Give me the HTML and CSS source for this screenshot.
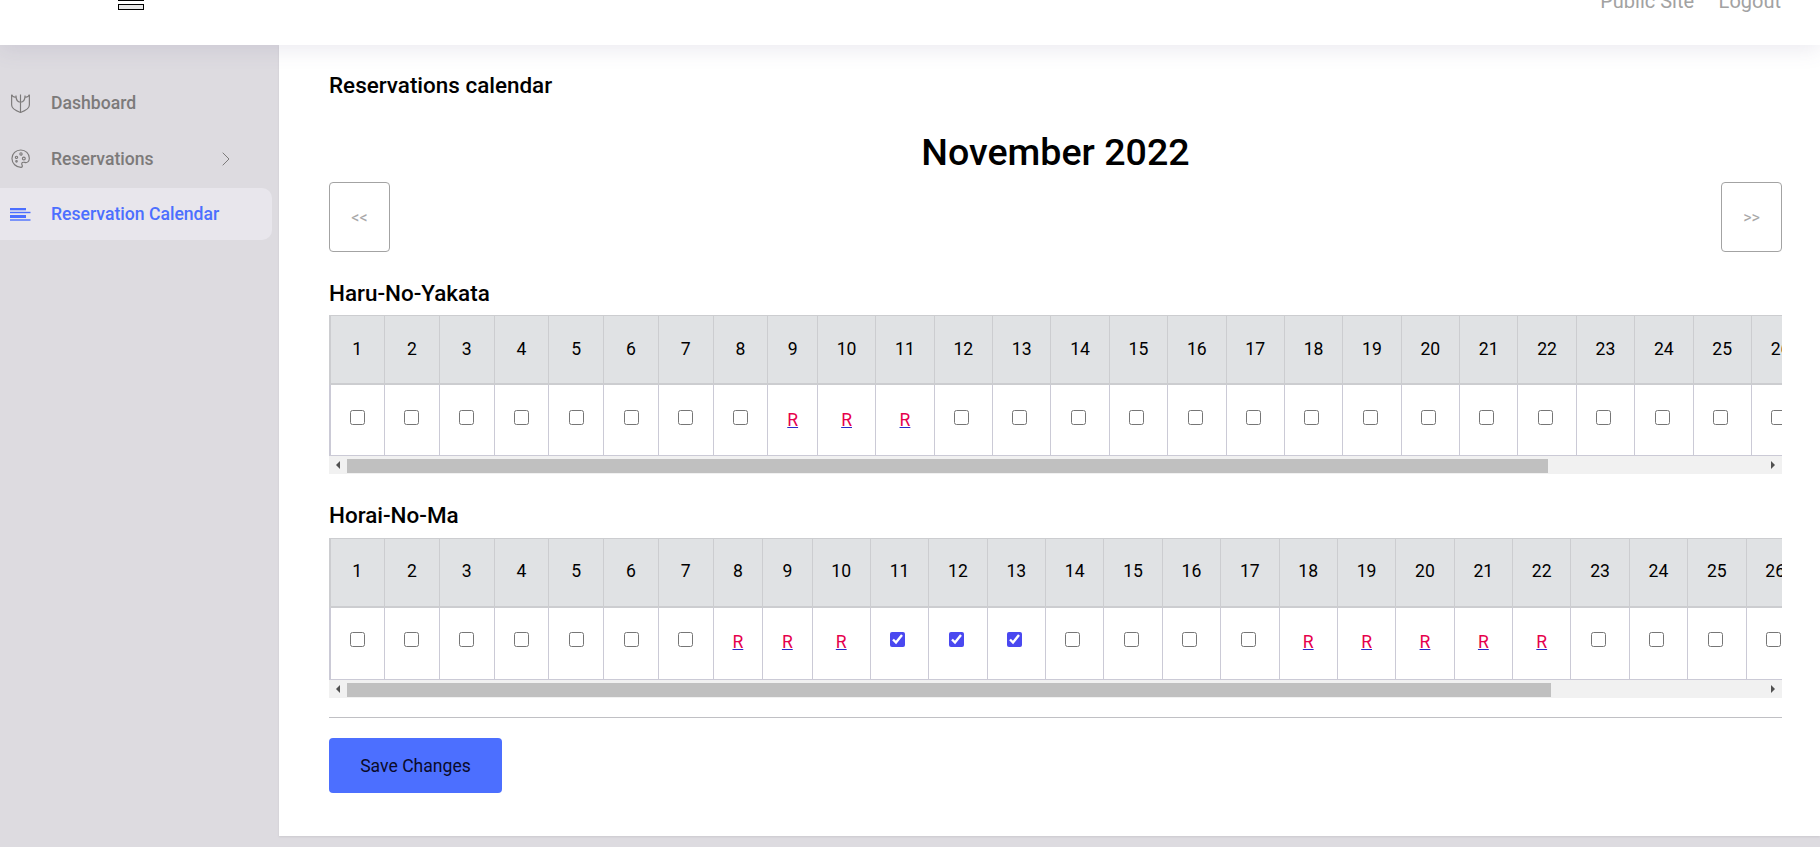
FILE: index.html
```html
<!DOCTYPE html>
<html lang="en">
<head>
<meta charset="utf-8">
<title>Reservations calendar</title>
<link rel="stylesheet" href="styles.css">
</head>
<body>
<header class="topbar">
  <div class="burger"><span class="burger-bar"></span><span class="burger-bar"></span></div>
  <nav class="toplinks"><a href="#">Public Site</a><a href="#">Logout</a></nav>
</header>
<div class="shell">
  <aside class="sidebar">
    <a class="side-item" href="#">
      <svg class="side-icon" viewBox="0 0 18 18" fill="none" stroke="currentColor" stroke-width="1.100"><path d="M.6.800V10.500c0 3.300 4 5.500 8.400 7 4.400-1.500 8.400-3.700 8.400-7V.800"/><path d="M.6.800C1.500 2.800 3 3.200 4.700 2.800M17.400.800C16.500 2.800 15 3.200 13.300 2.800"/><path d="M9 .5v17M4.700 1.500C4.700 5.800 6.500 7.800 9 7.800s4.300-2 4.300-6.300"/></svg>
      <span>Dashboard</span>
    </a>
    <a class="side-item" href="#">
      <svg class="side-icon" viewBox="0 0 20 20" fill="none" stroke="currentColor" stroke-width="1.200"><path d="M10.500 19.300C5.300 19.300 1 15.200 1 10.100 1 5 5.200 1 10.300 1c5.100 0 9 3.900 9 8.800 0 3.700-2.500 5-4.900 4.300-2.100-.6-3.400.4-3.100 1.900.2 1 1 1.500.6 2.400-.2.600-.7.900-1.400.9Z"/><circle cx="5.800" cy="8.800" r="1.200"/><circle cx="10.500" cy="5.200" r="1.200"/><circle cx="13.500" cy="10" r="1.500"/><circle cx="5.800" cy="13" r=".8"/></svg>
      <span>Reservations</span>
      <svg class="chevron" viewBox="0 0 8 14" fill="none" stroke="currentColor" stroke-width="1"><path d="M.7.700l6.300 6.300-6.300 6.300"/></svg>
    </a>
    <a class="side-item side-item-active" href="#">
      <svg class="side-icon side-icon-wide" viewBox="0 0 21 13" fill="currentColor"><rect x="0" y="0" width="16" height="2.300"/><rect x="0" y="3.800" width="20.500" height="1.400"/><rect x="0" y="7" width="16" height="3"/><rect x="0" y="11.300" width="20.500" height="1.400"/></svg>
      <span>Reservation Calendar</span>
    </a>
  </aside>
  <main class="panel">
    <h2 class="page-title">Reservations calendar</h2>
    <h1 class="month">November 2022</h1>
    <div class="month-nav">
      <button class="nav-btn" type="button">&lt;&lt;</button>
      <button class="nav-btn" type="button">&gt;&gt;</button>
    </div>

    <h3 class="room">Haru-No-Yakata</h3>
    <div class="scroller">
      <table class="cal">
        <thead><tr><th>1</th><th>2</th><th>3</th><th>4</th><th>5</th><th>6</th><th>7</th><th>8</th><th>9</th><th>10</th><th>11</th><th>12</th><th>13</th><th>14</th><th>15</th><th>16</th><th>17</th><th>18</th><th>19</th><th>20</th><th>21</th><th>22</th><th>23</th><th>24</th><th>25</th><th>26</th><th>27</th><th>28</th><th>29</th><th>30</th></tr></thead>
        <tbody><tr>
          <td><input type="checkbox"></td><td><input type="checkbox"></td><td><input type="checkbox"></td><td><input type="checkbox"></td><td><input type="checkbox"></td><td><input type="checkbox"></td><td><input type="checkbox"></td><td><input type="checkbox"></td>
          <td><a class="res" href="#"><span>R</span></a></td><td><a class="res" href="#"><span>R</span></a></td><td><a class="res" href="#"><span>R</span></a></td>
          <td><input type="checkbox"></td><td><input type="checkbox"></td><td><input type="checkbox"></td><td><input type="checkbox"></td><td><input type="checkbox"></td><td><input type="checkbox"></td><td><input type="checkbox"></td><td><input type="checkbox"></td><td><input type="checkbox"></td><td><input type="checkbox"></td><td><input type="checkbox"></td><td><input type="checkbox"></td><td><input type="checkbox"></td><td><input type="checkbox"></td><td><input type="checkbox"></td><td><input type="checkbox"></td><td><input type="checkbox"></td><td><input type="checkbox"></td><td><input type="checkbox"></td>
        </tr></tbody>
      </table>
    </div>
    <div class="hbar">
      <span class="hbar-btn hbar-left"></span>
      <span class="hbar-track"><span class="hbar-thumb"></span></span>
      <span class="hbar-btn hbar-right"></span>
    </div>

    <h3 class="room">Horai-No-Ma</h3>
    <div class="scroller scroller-b">
      <table class="cal cal-b">
        <thead><tr><th>1</th><th>2</th><th>3</th><th>4</th><th>5</th><th>6</th><th>7</th><th>8</th><th>9</th><th>10</th><th>11</th><th>12</th><th>13</th><th>14</th><th>15</th><th>16</th><th>17</th><th>18</th><th>19</th><th>20</th><th>21</th><th>22</th><th>23</th><th>24</th><th>25</th><th>26</th><th>27</th><th>28</th><th>29</th><th>30</th></tr></thead>
        <tbody><tr>
          <td><input type="checkbox"></td><td><input type="checkbox"></td><td><input type="checkbox"></td><td><input type="checkbox"></td><td><input type="checkbox"></td><td><input type="checkbox"></td><td><input type="checkbox"></td>
          <td><a class="res" href="#"><span>R</span></a></td><td><a class="res" href="#"><span>R</span></a></td><td><a class="res" href="#"><span>R</span></a></td>
          <td><input type="checkbox" checked></td><td><input type="checkbox" checked></td><td><input type="checkbox" checked></td>
          <td><input type="checkbox"></td><td><input type="checkbox"></td><td><input type="checkbox"></td><td><input type="checkbox"></td>
          <td><a class="res" href="#"><span>R</span></a></td><td><a class="res" href="#"><span>R</span></a></td><td><a class="res" href="#"><span>R</span></a></td><td><a class="res" href="#"><span>R</span></a></td><td><a class="res" href="#"><span>R</span></a></td>
          <td><input type="checkbox"></td><td><input type="checkbox"></td><td><input type="checkbox"></td><td><input type="checkbox"></td><td><input type="checkbox"></td><td><input type="checkbox"></td><td><input type="checkbox"></td><td><input type="checkbox"></td>
        </tr></tbody>
      </table>
    </div>
    <div class="hbar">
      <span class="hbar-btn hbar-left"></span>
      <span class="hbar-track"><span class="hbar-thumb hbar-thumb-b"></span></span>
      <span class="hbar-btn hbar-right"></span>
    </div>

    <hr class="rule">
    <button class="save" type="button">Save Changes</button>
  </main>
</div>
</body>
</html>
```
FILE: styles.css
```css
* { box-sizing: border-box; }
html, body { margin: 0; height: 847px; overflow: hidden; }
body {
  font-family: Roboto, "Liberation Sans", sans-serif;
  background: #dddbe0;
  color: #000;
  display: flex;
  flex-direction: column;
}
.topbar {
  height: 45px;
  flex: none;
  background: #fff;
  display: flex;
  justify-content: space-between;
  align-items: flex-start;
  padding: 0 39px 0 118px;
  box-shadow: 0 4px 22px rgba(90, 85, 130, .13);
  position: relative;
  z-index: 2;
}
.burger { width: 26px; margin-top: -5px; display: flex; flex-direction: column; gap: 3px; }
.burger-bar { display: block; height: 6px; background: #e8e8e8; border: 1.500px solid #000; }
.toplinks { display: flex; gap: 24.500px; margin-top: -11px; font-size: 20px; line-height: 24px; }
.toplinks a { color: #a2a2a2; text-decoration: none; }
.shell { flex: 1; display: flex; min-height: 0; }
.sidebar {
  width: 279px;
  flex: none;
  padding: 32px 7px 0 0;
  display: flex;
  flex-direction: column;
  gap: 3.500px;
}
.side-item {
  height: 52px;
  display: flex;
  align-items: center;
  padding-left: 11px;
  color: #7c7a7a;
  font-size: 17.600px;
  font-weight: 500;
  text-decoration: none;
  border-radius: 0 10px 10px 0;
}
.side-item span { margin-left: 21px; }
.side-icon { width: 19px; height: 19px; flex: none; }
.side-icon-wide { width: 21px; height: 13px; margin-left: -1px; }
.side-item-active span { margin-left: 20px; }
.side-item-active { background: #e8e6ec; color: #4c6fff; }
.chevron { width: 8px; height: 14px; margin-left: auto; margin-right: 42px; }
.panel {
  flex: 1;
  min-width: 0;
  height: 791px;
  background: #fff;
  padding: 28px 38px 0 50px;
  box-shadow: 0 1px 2px rgba(0, 0, 0, .08);
}
.page-title, .room { margin: 0; font-size: 22.450px; font-weight: 500; line-height: 24px; }
.month { margin: 34px 0 0; font-size: 37.600px; font-weight: 500; line-height: 43px; text-align: center; }
.month-nav { display: flex; justify-content: space-between; margin-top: 8px; }
.nav-btn {
  width: 61px;
  height: 70px;
  background: #fff;
  border: 1px solid #a3a3a3;
  border-radius: 4px;
  color: #a8a8a8;
  font: 16px Roboto, sans-serif;
}
.room { margin-top: 29px; }
.scroller { margin-top: 10px; overflow: hidden; }
.scroller-b { margin-top: 11px; }
.hbar { display: flex; height: 18px; background: #f1f1f1; }
.hbar-btn { width: 18px; flex: none; display: flex; align-items: center; justify-content: center; }
.hbar-left::before, .hbar-right::before {
  content: "";
  border-style: solid;
  border-color: transparent;
  border-width: 4px 0;
}
.hbar-left::before { border-right: 4px solid #505050; }
.hbar-right::before { border-left: 4px solid #505050; }
.hbar-track { flex: 1; padding: 3px 0 1px; }
.hbar-thumb { display: block; width: 1201px; height: 100%; background: #c0c0c0; }
.hbar-thumb-b { width: 1204px; }
.cal { border-collapse: collapse; font-size: 17.600px; line-height: 24px; }
.cal th, .cal td { padding: 0 18.800px; text-align: center; }
.cal th {
  height: 68px;
  font-weight: 400;
  background: #e0e2e4;
  border: 1px solid #cccdd0;
  border-bottom-width: 2px;
}
.cal td { height: 72px; background: #fff; border: 1px solid #cbcad6; }
.cal th:first-child, .cal td:first-child { border-left-width: 2px; padding-left: 18px; }
.cal-b th { padding-bottom: 3px; }
.cal-b td { height: 73px; padding-bottom: 3px; }
.cal input { display: block; width: 15px; height: 15px; margin: -5px .6px 0; accent-color: #4a48f0; }
.res { color: #2a2ac8; text-decoration: underline; }
.res span { color: #e6004c; }
.rule { margin: 19px 0 0; border: 0; border-top: 1px solid #c0c0c4; }
.save {
  display: block;
  margin-top: 20px;
  width: 173px;
  height: 55px;
  background: #4c6fff;
  border: 0;
  border-radius: 4px;
  color: #0a0a2a;
  font: 17.600px Roboto, sans-serif;
}
```
